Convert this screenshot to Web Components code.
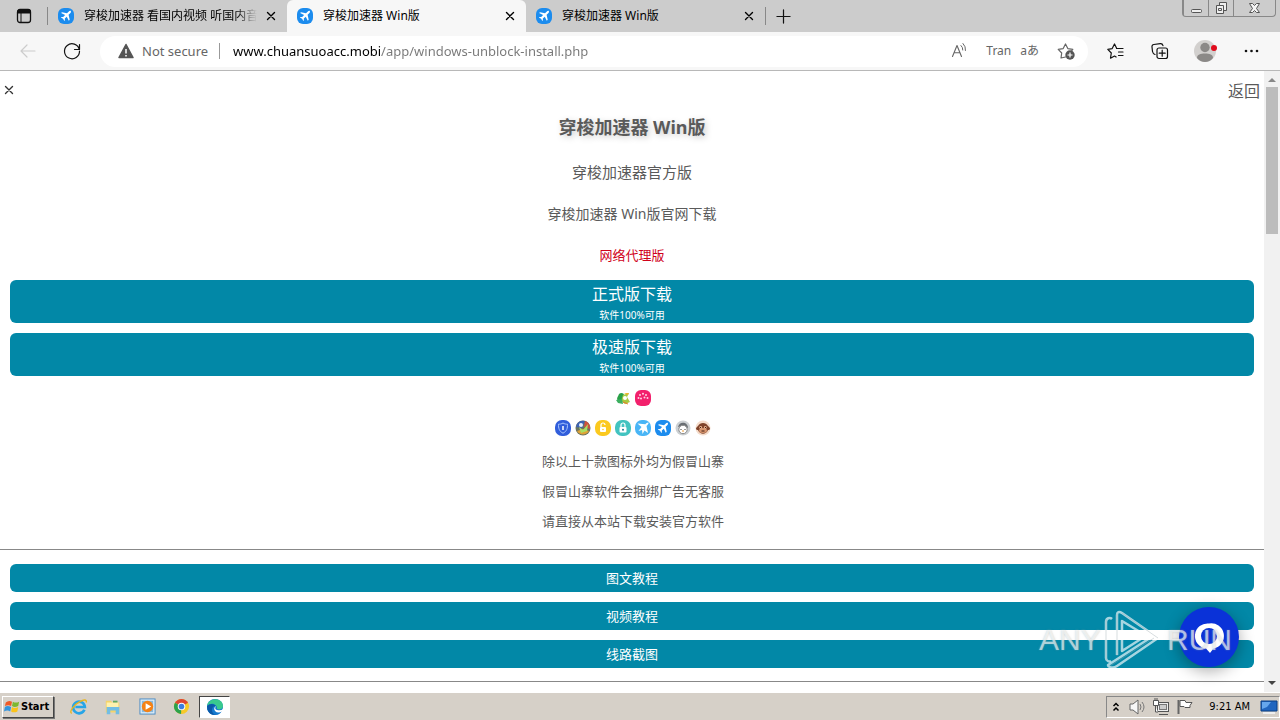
<!DOCTYPE html>
<html lang="zh-CN">
<head>
<meta charset="utf-8">
<title>穿梭加速器 Win版</title>
<style>
html,body{margin:0;height:100%;overflow:hidden}
body{font-family:"Noto Sans","Noto Sans CJK SC",sans-serif;font-size:13px;color:#555;background:#fff}
</style>
</head>
<body>
<desktop-screen></desktop-screen>
<script>
const FONT = '"Noto Sans","Noto Sans CJK SC",sans-serif';
const BASE = `*{box-sizing:border-box}button{font:inherit;color:inherit;border:0;background:none;padding:0;margin:0;cursor:pointer}a{color:inherit;text-decoration:none}`;
function define(name, css, html, init){
  const t = document.createElement('template');
  t.innerHTML = `<style>${BASE}${css}</style>${html}`;
  customElements.define(name, class extends HTMLElement{
    constructor(){ super(); this.attachShadow({mode:'open'}).append(t.content.cloneNode(true)); }
    connectedCallback(){ if(init) init(this, this.shadowRoot); }
  });
}
const line = 'fill="none" stroke="currentColor" stroke-linecap="round" stroke-linejoin="round"';
const ICONS = {
  tabs:[16,`<rect x="1.5" y="1.5" width="13" height="13" rx="2.5" fill="none" stroke="#111" stroke-width="1.3"/><path d="M1.5 5V4a2.500 2.500 0 0 1 2.500-2.500h8A2.500 2.500 0 0 1 14.500 4v1z" fill="#111" stroke="#111"/><path d="M5 5v9.500" stroke="#111"/>`],
  plane:[16,`<rect width="16" height="16" rx="6" fill="#1c8cee"/><path d="M12.800 2.900c-.8-.3-1.500.1-2.200.8L9 5.300 4 4.200l-.9.9 4 2-1.900 2-1.700-.2-.6.6 2.200 1.200 1.200 2.200.6-.6-.1-1.700 2-1.900 2 4 .9-.9-1.100-5 1.600-1.600c.7-.7 1-1.500.6-2.300z" fill="#fff"/>`],
  close:[16,`<path d="M4.500 4.500l7 7M11.500 4.500l-7 7" ${line} stroke-width="1.4"/>`],
  plus:[16,`<path d="M8 1v14M1 8h14" ${line} stroke-width="1.3"/>`],
  back:[18,`<path d="M16 9H2M8 3L2 9l6 6" ${line} stroke-width="1.2"/>`],
  reload:[18,`<path d="M16.300 7.500A7.500 7.500 0 1 0 16.500 9M16.500 2.500v5h-5" ${line} stroke-width="1.2"/>`],
  warn:[16,`<path d="M8 1.500L15 14.500H1z" fill="#555" stroke="#555" stroke-width="1.500" stroke-linejoin="round"/><path d="M8 6v4.500M8 12v1.500" stroke="#fff" stroke-width="1.500"/>`],
  read:[18,`<path d="M2.500 14.500L7 3.500l4.500 11M4.200 10.700h5.600" ${line} stroke-width="1.100"/><path d="M11 3.500q2 1.800 1.800 4.500M13 1.500Q16 4.500 15.500 8.500" ${line}/>`],
  starAdd:[18,`<path d="M8.500 15L4 16l.7-5L1.200 7.400l5-.8L8.500 2l2.300 4.600 5 .8-1 1.100" ${line} stroke-width="1.200"/><circle cx="13" cy="13" r="4.700" fill="#555"/><path d="M13 10.500v5M10.500 13h5" stroke="#fff" stroke-width="1.200"/>`],
  favs:[18,`<path d="M9.500 6L7.500 2 5.200 6.600.8 7.300 4.300 11l-.8 5.200L7.500 14l1.600 1M9.500 6.500H16M11.500 10H16M11.500 13.500H16" ${line} stroke-width="1.200"/>`],
  collect:[18,`<rect x="6" y="6" width="10.500" height="10.500" rx="2" ${line} stroke-width="1.200"/><path d="M11.200 8.200v6M8.200 11.200h6M4 12.500C2.500 12 1.800 11 1.500 9.500L1 5c-.2-1.300.5-2.300 1.800-2.500l6.500-.9c1.300-.2 2.300.6 2.700 2" ${line} stroke-width="1.200"/>`],
  dots:[18,`<g fill="#111"><circle cx="4" cy="9" r="1.300"/><circle cx="9.500" cy="9" r="1.300"/><circle cx="15" cy="9" r="1.300"/></g>`],
  avatar:[24,`<circle cx="12" cy="12" r="11" fill="#d2d0ce"/><circle cx="12" cy="8.500" r="4.700" fill="#8b8987"/><path d="M4 19c0-3.500 3.500-4.500 8-4.500s8 1 8 4.500c-4 5.300-12 5.300-16 0z" fill="#8b8987"/><circle cx="21" cy="9" r="3" fill="#e00b1c"/>`],
  frog:[16,`<path d="M4 4c2-2 5-1 5 1l-1 5-5 1c-2-3 0-4 1-7z" fill="#2aa148"/><path d="M8 5l6-2-2 4 3 5-5 2-4-3z" fill="#a9c83f"/><path d="M1 10l6-1 1 5-5-1z" fill="#3caf60"/><circle cx="10" cy="8" r="2" fill="#fff"/><path d="M9 3l5 0-1 2z" fill="#f1b52e"/><path d="M8 12l5 2" stroke="#e8792d"/>`],
  paw:[16,`<rect width="16" height="16" rx="6" fill="#f2206c"/><g fill="#ffd2e2"><circle cx="3.500" cy="8" r="1"/><circle cx="5" cy="5" r="1"/><circle cx="8" cy="3.700" r="1"/><circle cx="11" cy="5" r="1"/><circle cx="12.500" cy="8" r="1"/><circle cx="6" cy="8.500" r="1"/><circle cx="9.500" cy="7.500" r="1"/></g>`],
  shield:[16,`<rect width="16" height="16" rx="7" fill="#315edb"/><path d="M8 3c1.500 1 3 1.200 4.500 1.200 0 4-.5 7-4.500 9-4-2-4.500-5-4.500-9C5 4.200 6.500 4 8 3z" fill="none" stroke="#a8c6ff"/><path d="M8 6v4" stroke="#fff" stroke-width="1.500"/>`],
  globe:[16,`<circle cx="8" cy="8" r="7.500" fill="#6b7460"/><path d="M1 7a7 7 0 0 1 9-6L7 8z" fill="#3e63b3"/><path d="M10 1a7 7 0 0 1 5 8l-6-2z" fill="#cf523e"/><path d="M2 11l6-2 6 2a7 7 0 0 1-12 0z" fill="#e0a336"/><path d="M4 7l4 3 5-6-1 7-6 2z" fill="#a8e063"/><circle cx="6" cy="5" r="2" fill="#e7f3ff"/>`],
  lockY:[16,`<rect width="16" height="16" rx="7" fill="#fbc91f"/><rect x="5" y="7" width="6" height="5" rx="1" fill="#fff"/><path d="M6 7V5a2 2 0 0 1 4 0" fill="none" stroke="#fff" stroke-width="1.200"/><circle cx="8" cy="9.500" r=".8" fill="#fbc91f"/>`],
  lockG:[16,`<rect width="16" height="16" rx="7" fill="#42c3c0"/><rect x="4.500" y="7" width="7" height="5.500" rx="1" fill="#fff"/><path d="M6 7V5a2 2 0 0 1 4 0v2" fill="none" stroke="#fff" stroke-width="1.200"/><circle cx="8" cy="9.700" r="1" fill="#207a90"/>`],
  jet:[16,`<rect width="16" height="16" rx="7" fill="#49b5f6"/><path d="M13.500 2.500c-1-.3-2 .5-3.200 1.700L2.500 3.500l4 3.500-3 4 3.500-1 .5 4 2-3.500L13 13 11.500 6c1.500-1.500 2.300-2.500 2-3.500z" fill="#fff"/>`],
  penguin:[16,`<circle cx="8" cy="8" r="7.500" fill="#ccd0d3"/><path d="M3 7c1-4 4-5 7-4 2 1 3 3 3 5l-5-2z" fill="#696e73"/><circle cx="8" cy="9.500" r="4.200" fill="#fff" stroke="#888"/><path d="M6 9v1M10 9v1" stroke="#333"/><path d="M7 11h2" stroke="#e89a35"/>`],
  monkey:[16,`<circle cx="8" cy="8" r="7.500" fill="#f5dccb"/><path d="M1 8c1-1 1-1 2-2 2-4 8-4 10 0 1 1 1 1 2 2 0 2-1 2-2 2-2 5-8 5-10 0-1 0-2 0-2-2z" fill="#7f432a"/><ellipse cx="8" cy="10.500" rx="4" ry="2.500" fill="#d99770"/><circle cx="5.700" cy="7.500" r="1.400" fill="#e8b38f"/><circle cx="10.300" cy="7.500" r="1.400" fill="#e8b38f"/><path d="M5.500 7v1M10.500 7v1M6.500 11h3" stroke="#421d12"/>`],
  chat:[30,`<path d="M15 1.500A12.500 12.500 0 0 1 19.500 26.500L16 31l-4-4.500A12.500 12.500 0 0 1 15 1.500z" fill="#fff"/><circle cx="15" cy="14" r="8" fill="#0a32d8"/>`],
  play:[58,`<g fill="none" stroke="#fff" stroke-opacity=".65" stroke-width="2.500" stroke-linejoin="round"><path d="M6 50c-2 1-5 0-5-3V11c0-4 4-5 6-3"/><path d="M12 44V4c0-3 2-4 5-2l36 25-41 28c-4 3-9 1-9-1L45 27 17 10v30l22-14"/></g><path d="M1 8v42M12 3v42M17 2l36 25M5 55L49 27" fill="none" stroke="#9cabb0" stroke-opacity=".4"/>`],
  windows:[18,`<path d="M2 4q3-3 7-1L8 8Q5 6 1 8z" fill="#ef5a28"/><path d="M10 3q3 2 7 0l-1 5q-4 2-7 0z" fill="#7db831"/><path d="M1 9q3-2 7 0l-1 5q-3-2-7 0z" fill="#3595dd"/><path d="M9 9q3 2 7 0l-1 5q-4 2-7 0z" fill="#fbc31a"/>`],
  ie:[20,`<path d="M16 13a6.500 6.500 0 1 1 .5-3H6" fill="none" stroke="#27a5e7" stroke-width="3"/><path d="M2 17c-4-1 3-10 9-13 5-3 8-2 7 1" fill="none" stroke="#e9b51d" stroke-width="1.500"/>`],
  folder:[20,`<path d="M2 3h6l1 2h8v11H2z" fill="#f4d36b"/><path d="M3 5h13v5H3z" fill="#fff1ae"/><path d="M3 10h14v8h-4v-4H7v4H3z" fill="#72bde4"/><path d="M10 3h5v2h-5z" fill="#63a862"/>`],
  media:[18,`<rect x="1" y="1" width="16" height="16" fill="#dcecf8" stroke="#498bc3"/><rect x="3" y="3" width="12" height="12" fill="#86b9df"/><circle cx="9" cy="9" r="6" fill="#f58216"/><path d="M7 5.500l6 3.500-6 3.500z" fill="#fff"/>`],
  chrome:[18,`<circle cx="9" cy="9" r="8" fill="#f7c928"/><path d="M9 9L2.100 5A8 8 0 0 1 15.900 5z" fill="#df4534"/><path d="M9 9L2.100 5A8 8 0 0 0 8.500 17z" fill="#2ca24c"/><circle cx="9" cy="9" r="4" fill="#fff"/><circle cx="9" cy="9" r="3" fill="#3d7de0"/>`],
  edge:[18,`<circle cx="9" cy="9" r="8" fill="#1479ce"/><path d="M1 8c1-9 16-9 16 0 0 3-3 4-6 3 1-4-5-6-10-3z" fill="#39c98e"/><path d="M1 8c4-4 10-2 9 2-1 2 1 4 6 3-2 3-5 4-8 4C3 16 1 13 1 8z" fill="#1479ce"/><path d="M1 8q5-4 9 0-4 0-4 4 0 4 4 5-9 0-9-9z" fill="#0b58a6"/><path d="M10 8q-2 3 1 4 4 1 6-1v2q-5 3-8 0-2-3 1-5z" fill="#fff"/>`],
  up:[12,`<path d="M3.500 5L6 2.500 8.500 5M3.500 9.500L6 7l2.500 2.500" fill="none" stroke="#000" stroke-width="1.500"/>`],
  sound:[18,`<path d="M2 6h3l5-4v14l-5-4H2z" fill="#f7f7f7" stroke="#666"/><path d="M12 6q2 3 0 6M14 4q4 5 0 10" fill="none" stroke="#777"/>`],
  network:[18,`<rect x="5.500" y="4.500" width="11" height="9" fill="#eee" stroke="#555"/><rect x="7.500" y="6.500" width="7" height="5" fill="#ccc" stroke="#777"/><path d="M7 16.500h9M3.500 8v6H6M1.500 2.500h5v5h-5zM3 0v2M5 0v2" fill="#fff" stroke="#555"/>`],
  flag:[18,`<path d="M2.500 2v14" stroke="#666" stroke-width="2"/><path d="M4 2.500h5l1 2h6l-2 3 0 2H9l-1-1H4z" fill="#fff" stroke="#555"/>`],
  monitor:[18,`<path d="M1 3h16v10H1z" fill="#2166bf" stroke="#0b3e83"/><path d="M2 4h9L7 9 2 11z" fill="#66a7ec"/><path d="M3 15h12" stroke="#eee" stroke-width="2"/>`],
};
define('ui-icon', `:host{display:inline-flex;flex:none}svg{display:block;overflow:visible}`, `<svg aria-hidden="true"></svg>`, (h,r)=>{
  const [n,m]=ICONS[h.getAttribute('name')], s=r.querySelector('svg'), z=h.getAttribute('size')||n;
  s.setAttribute('viewBox',`0 0 ${n} ${n}`); s.setAttribute('width',z); s.setAttribute('height',z); s.innerHTML=m;
});
define('browser-tab', `
:host{display:flex;flex:0 1 239px;min-width:0;align-items:center;padding:0 8px 0 10px;color:#000;font-size:12px;border-radius:6px 6px 0 0}
:host([active]){background:#f7f7f7}
a{flex:1;display:flex;align-items:center;gap:10px;min-width:0;overflow:hidden}
.t{flex:1;white-space:nowrap;overflow:hidden;line-height:20px}
:host([long]) .t{mask-image:linear-gradient(90deg,#000 88%,transparent)}
button{display:flex;margin-left:6px}`,
`<a href="#"><ui-icon name="plane"></ui-icon><span class="t"><slot></slot></span></a><button aria-label="关闭标签页"><ui-icon name="close"></ui-icon></button>`);
define('window-controls', `
:host{display:flex;align-self:flex-start;height:17px;margin-right:4px;border:1px solid #888;border-top:0;border-radius:0 0 4px 4px;color:#555}
button{width:25px;display:grid;place-items:center;border-left:1px solid #888}
button:first-child{border-left:0}button:last-child{width:42px}`,
`<button aria-label="最小化"><svg width="13" height="14"><rect x="1.500" y="8.500" width="10" height="3" rx="1" fill="#eee" stroke="#555"/></svg></button>
<button aria-label="还原"><svg width="13" height="14"><path d="M4.500 1.500h7v8h-7z" fill="#eee" stroke="#555"/><path d="M1.500 4.500h7v8h-7z" fill="#eee" stroke="#555"/><path d="M3.500 7.500h3v2h-3z" fill="none" stroke="#555"/></svg></button>
<button aria-label="关闭"><svg width="13" height="14"><path d="M1.500 2.500h3l2 2 2-2h3L8.500 7.500l3 4h-3l-2-2-2 2h-3l3-4z" fill="#f5f5f5" stroke="#555"/></svg></button>`);
define('tab-strip', `
:host{display:flex;height:32px;background:#ccc;color:#111}
.act{width:47px;display:grid;place-items:center}
.sep{width:1px;height:18px;margin-top:7px;background:#888;flex:none}
.new{width:35px;display:grid;place-items:center}
.space{flex:1}`,
`<button class="act" aria-label="标签页操作"><ui-icon name="tabs"></ui-icon></button><span class="sep"></span>
<browser-tab long>穿梭加速器 看国内视频 听国内音乐</browser-tab><browser-tab active>穿梭加速器 Win版</browser-tab><browser-tab>穿梭加速器 Win版</browser-tab>
<span class="sep"></span><button class="new" aria-label="新建标签页"><ui-icon name="plus" size="15"></ui-icon></button><span class="space"></span><window-controls></window-controls>`);
define('address-bar', `
:host{flex:1;display:flex;align-items:center;height:31px;border-radius:16px;background:#fff;padding:0 13px 0 18px;color:#666;font-size:13px;min-width:0}
.sec{display:flex;align-items:center;gap:8px;line-height:20px;white-space:nowrap}
i{width:1px;height:16px;background:#999;margin:0 13px 0 11px}
input{flex:1;min-width:0;border:0;outline:0;padding:0;height:24px;font:13px ${FONT};color:#666;background:linear-gradient(90deg,#000 0 148px,#777 148px) text;-webkit-text-fill-color:transparent}
.r{display:flex;align-items:center;line-height:20px;font-size:12px}
.r button{display:flex}.tr{margin-left:18px}.la{margin:0 18px 0 9px;line-height:20px}`,
`<button class="sec"><ui-icon name="warn"></ui-icon><span>Not secure</span></button><i></i>
<input type="text" aria-label="地址" value="www.chuansuoacc.mobi/app/windows-unblock-install.php" spellcheck="false">
<span class="r"><button aria-label="朗读"><ui-icon name="read"></ui-icon></button><button class="tr">Tran</button><button class="la">aあ</button><button aria-label="收藏"><ui-icon name="starAdd"></ui-icon></button></span>`);
define('tool-bar', `
:host{display:flex;align-items:center;height:39px;background:#f7f7f7;border-bottom:1px solid #b8b8b8;color:#111}
.b{display:grid;place-items:center;width:44px}.back{color:#ccc;width:56px}.re{width:32px;margin-right:12px}
.tools{display:flex;margin-left:6px;padding-right:6px}.tools .b:nth-child(3),.tools .b:nth-child(4){width:46px}`,
`<button class="b back" aria-label="后退"><ui-icon name="back"></ui-icon></button><button class="b re" aria-label="刷新"><ui-icon name="reload"></ui-icon></button>
<address-bar></address-bar>
<span class="tools"><button class="b" aria-label="收藏夹"><ui-icon name="favs"></ui-icon></button><button class="b" aria-label="集锦"><ui-icon name="collect"></ui-icon></button><button class="b" aria-label="个人资料"><ui-icon name="avatar"></ui-icon></button><button class="b" aria-label="更多"><ui-icon name="dots"></ui-icon></button></span>`);
define('wide-link', `
:host{display:block}
a{display:block;background:#0288a7;color:#fff;text-align:center;border-radius:6px;line-height:20px;font-size:13px;padding:4px 0}
:host([big]) a{font-size:16px;padding:3px 0 0;line-height:22px;height:43px}
::slotted(small){display:block;font-size:10px;line-height:20px}`,
`<a href="#"><slot></slot></a>`);
define('side-scroll', `
:host{display:flex;flex-direction:column;align-items:center;width:16px;flex:none;background:#f1f1f1}
svg{display:block;width:8px;height:16px;flex:none}.th{width:12px;height:147px;background:#bcbcbc}.sp{flex:1}`,
`<svg viewBox="0 0 8 16"><path d="M0 11l4-4 4 4z" fill="#888"/></svg><span class="th"></span><span class="sp"></span><svg viewBox="0 0 8 16"><path d="M0 5l4 4 4-4z" fill="#444"/></svg>`);
define('download-page', `
:host{display:block;flex:1;min-width:0;overflow:hidden;text-align:center;font-size:13px;color:#5a5a5a}
nav{display:flex;justify-content:space-between;align-items:center;height:38px;padding:0 4px 0 1px;font-size:16px}
nav button{display:flex;color:#333}
h1,p{margin:0}
h1{font-size:18px;line-height:36px;font-weight:700;text-shadow:2px 2px 6px #ccc}
.a{font-size:15px;line-height:30px;margin-top:12px}.b{font-size:14px;line-height:30px;margin-top:12px}
.red{color:#d0021b;line-height:30px;margin:11px 0 10px}
.stack{display:flex;flex-direction:column;gap:10px;padding:0 10px}
.icons{display:flex;justify-content:center;gap:4px;height:30px;align-items:center;padding-left:2px}
.first{margin-top:7px}
.note{line-height:30px;padding-left:2px}.notes{margin-top:3px}
hr{border:0;border-top:1px solid #888;margin:13px 0 14px}`,
`<nav><button aria-label="关闭"><ui-icon name="close"></ui-icon></button><a href="#">返回</a></nav>
<h1>穿梭加速器 Win版</h1><p class="a">穿梭加速器官方版</p><p class="b">穿梭加速器 Win版官网下载</p><p class="red">网络代理版</p>
<div class="stack"><wide-link big>正式版下载<small>软件100%可用</small></wide-link><wide-link big>极速版下载<small>软件100%可用</small></wide-link></div>
<div class="icons first"><ui-icon name="frog"></ui-icon><ui-icon name="paw"></ui-icon></div>
<div class="icons"><ui-icon name="shield"></ui-icon><ui-icon name="globe"></ui-icon><ui-icon name="lockY"></ui-icon><ui-icon name="lockG"></ui-icon><ui-icon name="jet"></ui-icon><ui-icon name="plane"></ui-icon><ui-icon name="penguin"></ui-icon><ui-icon name="monkey"></ui-icon></div>
<div class="notes"><p class="note">除以上十款图标外均为假冒山寨</p><p class="note">假冒山寨软件会捆绑广告无客服</p><p class="note">请直接从本站下载安装官方软件</p></div>
<hr><div class="stack"><wide-link>图文教程</wide-link><wide-link>视频教程</wide-link><wide-link>线路截图</wide-link></div><hr>`);
define('chat-button', `
:host{display:block;position:absolute;right:41px;bottom:25px}
button{display:grid;place-items:center;width:60px;height:60px;border-radius:50%;background:#0a32d8;box-shadow:0 4px 16px #0005}`,
`<button aria-label="在线客服"><ui-icon name="chat"></ui-icon></button>`);
define('water-mark', `
:host{display:flex;position:absolute;right:48px;bottom:22px;width:193px;justify-content:space-between;align-items:center;height:60px;pointer-events:none;font:30px/60px "Liberation Sans Narrow","Liberation Sans",sans-serif;color:#ffffff99;text-shadow:0 0 2px #90a0a088}`,
`<span>ANY</span><ui-icon name="play"></ui-icon><span>RUN</span>`);
define('task-bar', `
:host{display:flex;align-items:center;height:28px;background:#d6d0c8;border-top:1px solid #fff;box-shadow:0 -1px #d6d0c8;color:#000;font:11px "DejaVu Sans Condensed","DejaVu Sans",sans-serif;padding-left:2px}
.start{display:flex;align-items:center;gap:1px;height:22px;width:52px;padding-left:1px;border:1px solid;border-color:#fff #444 #444 #fff;box-shadow:1px 1px #777;font-weight:700}
.apps{display:flex;margin-left:8px}.apps button{width:34px;height:22px;display:grid;place-items:center}
.apps .on{width:31px;margin-left:1px;background:#fff;border:1px solid;border-color:#444 #fff #fff #444}
.tray{display:flex;align-items:center;margin-left:auto;height:22px;border:1px solid;border-color:#888 #fff #fff #888;padding:0 1px 0 3px;gap:6px}
time{padding:0 4px 0 9px;white-space:nowrap}.tray button{display:flex}`,
`<button class="start"><ui-icon name="windows" size="16"></ui-icon>Start</button>
<span class="apps"><button aria-label="Internet Explorer"><ui-icon name="ie" size="18"></ui-icon></button><button aria-label="文件"><ui-icon name="folder" size="18"></ui-icon></button><button aria-label="媒体"><ui-icon name="media" size="17"></ui-icon></button><button aria-label="Chrome"><ui-icon name="chrome" size="17"></ui-icon></button><button class="on" aria-label="Edge"><ui-icon name="edge"></ui-icon></button></span>
<span class="tray"><button aria-label="显示隐藏的图标"><ui-icon name="up"></ui-icon></button><button aria-label="音量"><ui-icon name="sound"></ui-icon></button><button aria-label="网络"><ui-icon name="network"></ui-icon></button><button aria-label="通知"><ui-icon name="flag"></ui-icon></button><time>9:21 AM</time><ui-icon name="monitor"></ui-icon></span>`);
define('desktop-screen', `
:host{display:flex;flex-direction:column;height:100vh;font-family:${FONT}}
main{flex:1;min-height:0;display:flex;position:relative;overflow:hidden;background:#fff}`,
`<tab-strip></tab-strip><tool-bar></tool-bar><main><download-page></download-page><side-scroll></side-scroll><chat-button></chat-button><water-mark></water-mark></main><task-bar></task-bar>`);
</script>
</body>
</html>
